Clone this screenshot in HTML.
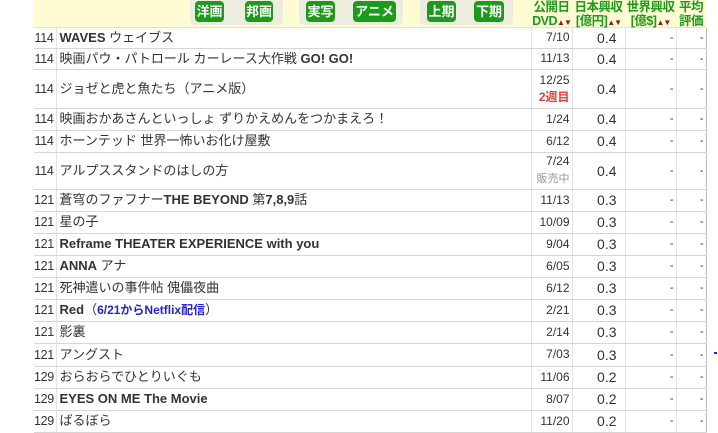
<!DOCTYPE html>
<html><head><meta charset="utf-8"><style>
body{margin:0;background:#fff;width:718px;height:421px;overflow:hidden;font-family:"Liberation Sans","Noto Sans CJK JP",sans-serif;color:#333;}
.hdr{position:absolute;left:34px;top:0;width:672px;height:27px;background:#fffbd2;border-bottom:1px solid #e8e4b8;}
.grp{position:absolute;top:0;height:25px;background:#ececdf;border-radius:0 0 5px 5px;}
.btn{position:absolute;top:1px;height:21px;background:#1a9c1a;color:#fff;border-radius:4px;font-size:13px;font-weight:bold;line-height:21px;text-align:center;}
.hc{position:absolute;top:0;color:#1a9c1a;font-size:12.5px;font-weight:bold;text-align:center;line-height:14px;white-space:nowrap;letter-spacing:-0.5px;}
.hc span{color:#8b1a1a;font-size:8px;letter-spacing:-1px;}
table{position:absolute;left:34px;top:28px;border-collapse:collapse;width:672px;table-layout:fixed;font-size:13px;}
td{border-bottom:1px solid #d6d6d6;border-right:1px solid #e4e4e4;padding:0 2px;white-space:nowrap;overflow:hidden;line-height:14px;}
td:nth-child(1){text-align:right;padding:0 2px 0 0;font-size:12.5px;letter-spacing:-0.3px;}
td:nth-child(2){padding-left:3px;}
td:nth-child(3){text-align:right;font-size:12px;line-height:17px;}
td:nth-child(4){text-align:right;font-size:14px;padding-right:8px;}
td:nth-child(5),td:nth-child(6){text-align:right;font-size:11px;}
td:nth-child(6){border-right:1px solid #bbb;}
b{font-weight:bold;}
.r{color:#e04040;font-weight:bold;}
.g{color:#999;font-size:11px;}
.bl{color:#2222dd;font-weight:bold;font-size:12px;}
</style></head><body>
<div class="hdr"></div>
<div class="grp" style="left:190px;width:93px"></div>
<div class="grp" style="left:299px;width:104px"></div>
<div class="grp" style="left:420px;width:93px"></div>
<div class="btn" style="left:195px;width:29px">洋画</div>
<div class="btn" style="left:245px;width:28px">邦画</div>
<div class="btn" style="left:306px;width:29px">実写</div>
<div class="btn" style="left:353px;width:43px">アニメ</div>
<div class="btn" style="left:427px;width:29px">上期</div>
<div class="btn" style="left:474px;width:30px">下期</div>
<div class="hc" style="left:531px;width:41px">公開日<br>DVD<span>▲▼</span></div>
<div class="hc" style="left:572px;width:53px">日本興収<br>[億円]<span>▲▼</span></div>
<div class="hc" style="left:625px;width:51px">世界興収<br>[億$]<span>▲▼</span></div>
<div class="hc" style="left:676px;width:30px">平均<br>評価</div>
<table>
<colgroup><col style="width:22px"><col style="width:475px"><col style="width:41px"><col style="width:53px"><col style="width:51px"><col style="width:30px"></colgroup>
<tr style="height:20px"><td>114</td><td><b>WAVES</b> ウェイブス</td><td>7/10</td><td>0.4</td><td>-</td><td>-</td></tr>
<tr style="height:21px"><td>114</td><td>映画パウ・パトロール カーレース大作戦 <b>GO! GO!</b></td><td>11/13</td><td>0.4</td><td>-</td><td>-</td></tr>
<tr style="height:39px"><td>114</td><td>ジョゼと虎と魚たち（アニメ版）</td><td>12/25<br><span class="r">2週目</span></td><td>0.4</td><td>-</td><td>-</td></tr>
<tr style="height:22px"><td>114</td><td>映画おかあさんといっしょ ずりかえめんをつかまえろ！</td><td>1/24</td><td>0.4</td><td>-</td><td>-</td></tr>
<tr style="height:22px"><td>114</td><td>ホーンテッド 世界一怖いお化け屋敷</td><td>6/12</td><td>0.4</td><td>-</td><td>-</td></tr>
<tr style="height:37px"><td>114</td><td>アルプススタンドのはしの方</td><td>7/24<br><span class="g">販売中</span></td><td>0.4</td><td>-</td><td>-</td></tr>
<tr style="height:22px"><td>121</td><td>蒼穹のファフナー<b>THE BEYOND</b> 第<b>7,8,9</b>話</td><td>11/13</td><td>0.3</td><td>-</td><td>-</td></tr>
<tr style="height:22px"><td>121</td><td>星の子</td><td>10/09</td><td>0.3</td><td>-</td><td>-</td></tr>
<tr style="height:22px"><td>121</td><td><b>Reframe THEATER EXPERIENCE with you</b></td><td>9/04</td><td>0.3</td><td>-</td><td>-</td></tr>
<tr style="height:22px"><td>121</td><td><b>ANNA</b> アナ</td><td>6/05</td><td>0.3</td><td>-</td><td>-</td></tr>
<tr style="height:22px"><td>121</td><td>死神遣いの事件帖 傀儡夜曲</td><td>6/12</td><td>0.3</td><td>-</td><td>-</td></tr>
<tr style="height:22px"><td>121</td><td><b>Red</b>（<span class="bl">6/21からNetflix配信</span>）</td><td>2/21</td><td>0.3</td><td>-</td><td>-</td></tr>
<tr style="height:22px"><td>121</td><td>影裏</td><td>2/14</td><td>0.3</td><td>-</td><td>-</td></tr>
<tr style="height:23px"><td>121</td><td>アングスト</td><td>7/03</td><td>0.3</td><td>-</td><td>-</td></tr>
<tr style="height:22px"><td>129</td><td>おらおらでひとりいぐも</td><td>11/06</td><td>0.2</td><td>-</td><td>-</td></tr>
<tr style="height:22px"><td>129</td><td><b>EYES ON ME The Movie</b></td><td>8/07</td><td>0.2</td><td>-</td><td>-</td></tr>
<tr style="height:22px"><td>129</td><td>ばるぼら</td><td>11/20</td><td>0.2</td><td>-</td><td>-</td></tr>
</table>
<div style="position:absolute;left:714px;top:352px;width:3px;height:2px;background:#2222aa"></div>
</body></html>
